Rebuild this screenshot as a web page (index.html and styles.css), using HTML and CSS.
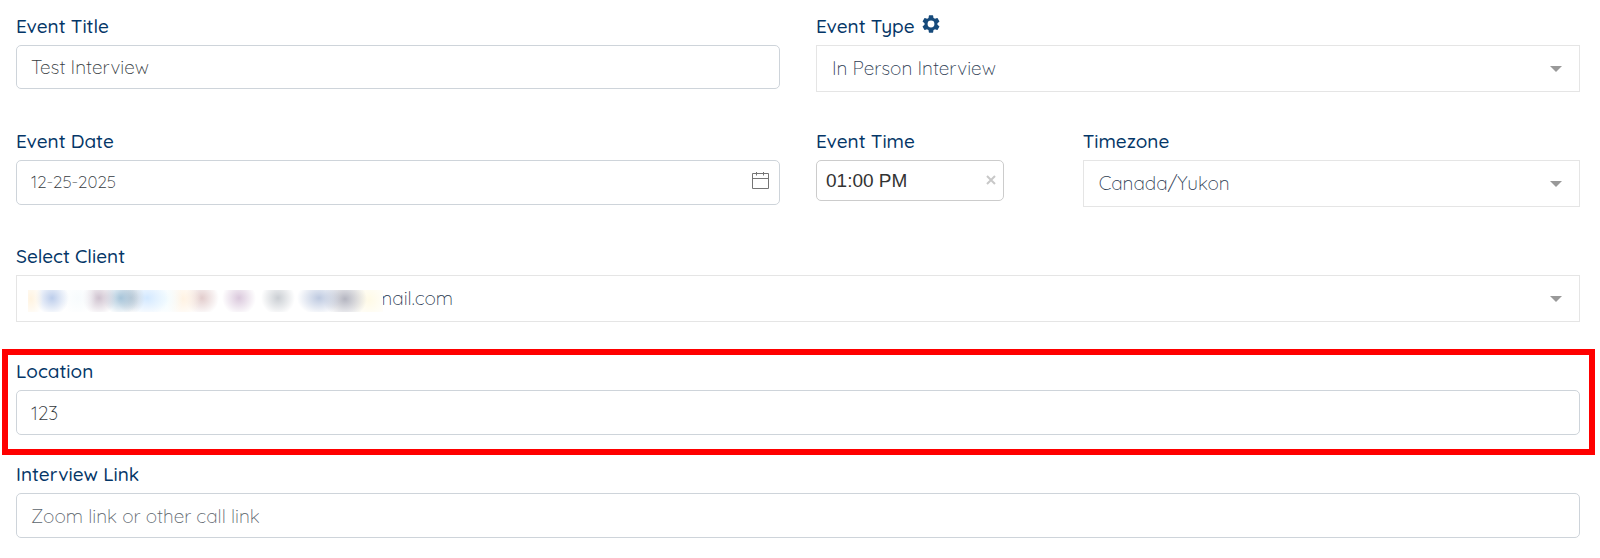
FILE: index.html
```html
<!DOCTYPE html>
<html lang="en">
<head>
<meta charset="utf-8">
<meta name="viewport" content="width=device-width, initial-scale=1">
<title>Event</title>
<link rel="stylesheet" href="styles.css">
</head>
<body>
<form class="event-form">
  <div class="field half">
    <label class="label" for="title">Event Title</label>
    <input class="input short" id="title" type="text" value="Test Interview">
  </div>
  <div class="field half">
    <div class="label-row">
      <label class="label" for="type">Event Type</label>
      <button class="gear" type="button" aria-label="Event type settings">
        <svg viewBox="2 2 20 20" width="18" height="18"><path fill="currentColor" d="M19.14 12.94c.04-.3.06-.61.06-.94s-.02-.64-.07-.94l2.03-1.58a.49.49 0 0 0 .12-.61l-1.92-3.32a.49.49 0 0 0-.59-.22l-2.39.96a7 7 0 0 0-1.62-.94l-.36-2.54a.48.48 0 0 0-.48-.41h-3.84a.47.47 0 0 0-.47.41l-.36 2.54c-.59.24-1.13.57-1.62.94l-2.39-.96a.48.48 0 0 0-.59.22L2.74 8.87a.47.47 0 0 0 .12.61l2.03 1.58c-.05.3-.09.63-.09.94s.02.64.07.94l-2.03 1.58a.49.49 0 0 0-.12.61l1.92 3.32c.12.22.37.29.59.22l2.39-.96c.5.38 1.03.7 1.62.94l.36 2.54c.05.24.24.41.48.41h3.84c.24 0 .44-.17.47-.41l.36-2.54c.59-.24 1.13-.56 1.62-.94l2.39.96c.22.08.47 0 .59-.22l1.92-3.32a.47.47 0 0 0-.12-.61zM12 15.800a3.800 3.800 0 1 1 0-7.600 3.800 3.800 0 0 1 0 7.600z"/></svg>
      </button>
    </div>
    <div class="control">
      <select class="select" id="type"><option>In Person Interview</option></select>
    </div>
  </div>

  <div class="field half">
    <label class="label" for="date">Event Date</label>
    <div class="control">
      <input class="input date" id="date" type="text" value="12-25-2025">
      <svg class="calendar" viewBox="0 0 18 18" width="18" height="18" fill="none" stroke="#757575" aria-hidden="true"><path d="M.5 1.500h16v15H.5zM.5 6.500h16M4.500 0v3.500M11.500 0v3.500"/></svg>
    </div>
  </div>
  <div class="field sixth">
    <label class="label" for="time">Event Time</label>
    <div class="control time-control">
      <input class="input time" id="time" type="text" value="01:00 PM">
      <button class="clear" type="button" aria-label="Clear time">
        <svg viewBox="0 0 10 10" width="10" height="10" fill="none" stroke="#c8c8c8" stroke-width="2"><path d="M1 1l8 8M9 1l-8 8"/></svg>
      </button>
    </div>
  </div>
  <div class="field third">
    <label class="label" for="zone">Timezone</label>
    <div class="control">
      <select class="select" id="zone"><option>Canada/Yukon</option></select>
    </div>
  </div>

  <div class="field full">
    <label class="label" for="client">Select Client</label>
    <div class="control">
      <select class="select client" id="client"><option>mail.com</option></select>
      <span class="redacted" aria-hidden="true"></span>
    </div>
  </div>

  <div class="field full highlighted">
    <label class="label" for="location">Location</label>
    <input class="input" id="location" type="text" value="123">
  </div>

  <div class="field full link-field">
    <label class="label" for="link">Interview Link</label>
    <input class="input" id="link" type="text" placeholder="Zoom link or other call link">
  </div>
</form>
</body>
</html>
```
FILE: styles.css
```css
* {
  box-sizing: border-box;
}

body {
  margin: 0;
  background: #fff;
  font-family: Quicksand, Lato, sans-serif;
  color: #495057;
}

.event-form {
  display: grid;
  grid-template-columns: repeat(12, minmax(0, 1fr));
  align-items: start;
  column-gap: 36px;
  row-gap: 39px;
  padding: 16px 20px 16px 16px;
}

.field {
  display: flex;
  flex-direction: column;
}

.half { grid-column: span 6; }
.third { grid-column: span 4; }
.sixth { grid-column: span 2; }
.full { grid-column: 1 / -1; }

.label {
  height: 29px;
  line-height: 20px;
  font-size: 19px;
  font-weight: 500;
  color: #043667;
}

.label-row {
  display: flex;
  gap: 7px;
}

.gear {
  height: 18px;
  margin-top: -1px;
  padding: 0;
  border: 0;
  background: none;
  color: #164a7b;
}

.gear svg,
.clear svg {
  display: block;
}

.control {
  position: relative;
}

.input,
.select {
  display: block;
  width: 100%;
  font: 300 19px Quicksand, Lato, sans-serif;
  color: #343a40;
  background: #fff;
  outline: 0;
}

.input {
  height: 45px;
  padding: 0 14px;
  border: 1px solid #ced4da;
  border-radius: 5px;
}

.input::placeholder {
  color: #5c656d;
  opacity: 1;
}

.short {
  height: 44px;
}

.date {
  padding: 0 48px 2px 14px;
  font-size: 17px;
}

.calendar {
  position: absolute;
  right: 10px;
  top: 12px;
}

.time-control {
  width: 188px;
  max-width: 100%;
}

.time {
  height: 41px;
  padding: 0 32px 0 9px;
  border-color: #ccc;
  font: 400 19px "Liberation Sans", Arial, sans-serif;
  color: #333;
}

.clear {
  position: absolute;
  right: 8px;
  top: 15px;
  padding: 0;
  border: 0;
  background: none;
}

.select {
  height: 47px;
  padding: 0 40px 2px 15px;
  border: 1px solid #e5e5e5;
  border-radius: 0;
  appearance: none;
  color: #2d3b52;
}

.control:has(.select)::after {
  content: "";
  position: absolute;
  right: 18px;
  top: 21px;
  border: 6px solid transparent;
  border-top-color: #999;
  border-bottom: 0;
  pointer-events: none;
}

.client {
  padding-left: 358px;
}

.redacted {
  position: absolute;
  left: 12px;
  top: 15px;
  width: 355px;
  height: 22px;
  pointer-events: none;
  background:
    radial-gradient(ellipse 12px 20px at 3px 9px, #fff3e0, transparent),
    radial-gradient(ellipse 17px 17px at 24px 8px, #bccdeb, transparent),
    radial-gradient(ellipse 18px 18px at 50px 8px, #f7fbfd, transparent),
    radial-gradient(ellipse 17px 17px at 71px 8px, #cfc2cf, transparent),
    radial-gradient(ellipse 18px 17px at 93px 8px, #a7c5da, transparent),
    radial-gradient(ellipse 14px 16px at 103px 8px, #c2cbd4, transparent),
    radial-gradient(ellipse 22px 18px at 119px 8px, #d2e8ff, transparent),
    radial-gradient(ellipse 18px 20px at 137px 9px, #f3fcff, transparent),
    radial-gradient(ellipse 18px 20px at 155px 9px, #fff2e2, transparent),
    radial-gradient(ellipse 17px 17px at 174px 8px, #e2cccc, transparent),
    radial-gradient(ellipse 17px 17px at 211px 8px, #dac8dc, transparent),
    radial-gradient(ellipse 17px 17px at 250px 8px, #caced3, transparent),
    radial-gradient(ellipse 22px 17px at 291px 8px, #bdc9e0, transparent),
    radial-gradient(ellipse 22px 19px at 317px 9px, #b4b5c0, transparent),
    radial-gradient(ellipse 22px 22px at 341px 10px, #fffae6, transparent),
    #fff;
}

.highlighted {
  position: relative;
}

.highlighted::after {
  content: "";
  position: absolute;
  inset: -12px -15px -20px -14px;
  border: 6px solid #f00;
  pointer-events: none;
}

.link-field {
  margin-top: -10px;
}
```
